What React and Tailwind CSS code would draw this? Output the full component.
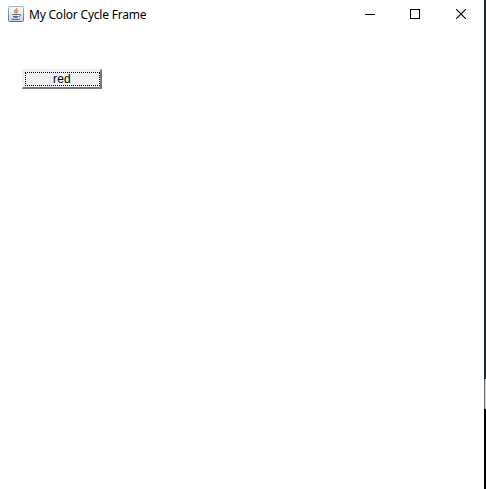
function JavaIcon() {
  return (
    <svg className="h-4 w-4 shrink-0" viewBox="0 0 16 16" fill="none">
      <defs>
        <linearGradient id="tile" x1="0" y1="0" x2="0" y2="1">
          <stop offset="0" stopColor="#fbfcfd" />
          <stop offset="1" stopColor="#c9d6e1" />
        </linearGradient>
        <linearGradient id="rim" x1="0" y1="0" x2="0" y2="1">
          <stop offset="0" stopColor="#a3b8ca" />
          <stop offset="1" stopColor="#54718b" />
        </linearGradient>
      </defs>
      <rect x="0.5" y="0.5" width="15" height="15" rx="1" fill="url(#tile)" stroke="url(#rim)" />
      <path d="M8.8 2c.6 1.6-2.800 2.200-2.200 3.700.2.500.7.900.9 1.600M10.300 4.300C8.800 5 8.100 5.600 8.700 6.400c.3.400.1.800-.3 1.100" stroke="#e87e22" strokeWidth="1.300" />
      <path d="M4.300 8.500h6.500M5 10.500h5.200M5.600 11.700h4M3.300 13.200c1.500.6 7.200.5 8.800-.1M11 8.500c2.500-.5 2.200 1.700-.2 2.200" stroke="#4c6d8b" strokeWidth="1" />
    </svg>
  );
}

function TitleBar() {
  return (
    <header className="flex h-7 items-center pl-2">
      <JavaIcon />
      <h1 className="ml-[5px] w-[118px] whitespace-nowrap pt-px text-[12px] leading-4 tracking-[-0.21px]">
        My Color Cycle Frame
      </h1>
      <div className="ml-auto flex">
        <button aria-label="Minimize" className="flex h-7 w-[45px] items-center justify-center">
          <svg className="h-[11px] w-[11px]" viewBox="0 0 11 11" shapeRendering="crispEdges">
            <path d="M0 5.500h10" stroke="#000" />
          </svg>
        </button>
        <button aria-label="Maximize" className="flex h-7 w-[45px] items-center justify-center">
          <svg className="h-[11px] w-[11px]" viewBox="0 0 11 11" shapeRendering="crispEdges">
            <rect x="0.500" y="0.500" width="9" height="9" fill="none" stroke="#000" />
          </svg>
        </button>
        <button aria-label="Close" className="flex h-7 w-[46px] items-center pl-[18px]">
          <svg className="h-[10px] w-[10px]" viewBox="0 0 10 10">
            <path d="M0 0l10 10M10 0L0 10" stroke="#000" strokeWidth="1.100" />
          </svg>
        </button>
      </div>
    </header>
  );
}

export default function App() {
  return (
    <div className="flex h-[489px] w-[486px] overflow-hidden bg-white font-['Noto_Sans','Open_Sans',sans-serif] text-black">
      <main className="flex w-[484px] flex-col">
        <TitleBar />
        <section className="flex-1 pl-[22px] pt-[41px]">
          <button className="block h-5 w-20 border-b-2 border-l border-r-2 border-t border-b-[#777] border-l-[#e8e8e8] border-r-[#777] border-t-[#f0f0f0] bg-[#f0f0f0] pb-px pl-[2px] pt-[2px] font-['Liberation_Sans',Arial,sans-serif] text-[12px]">
            <span className="flex h-[14px] w-[75px] items-center justify-center border border-dotted border-black pr-px leading-[14px] tracking-[0.2px]">
              red
            </span>
          </button>
        </section>
      </main>
      <aside className="flex w-[2px] flex-col">
        <div className="h-[379px] bg-[#20262b]" />
        <div className="h-[30px] border-l border-[#666] bg-[#ddd]" />
        <div className="flex-1 bg-black" />
      </aside>
    </div>
  );
}
